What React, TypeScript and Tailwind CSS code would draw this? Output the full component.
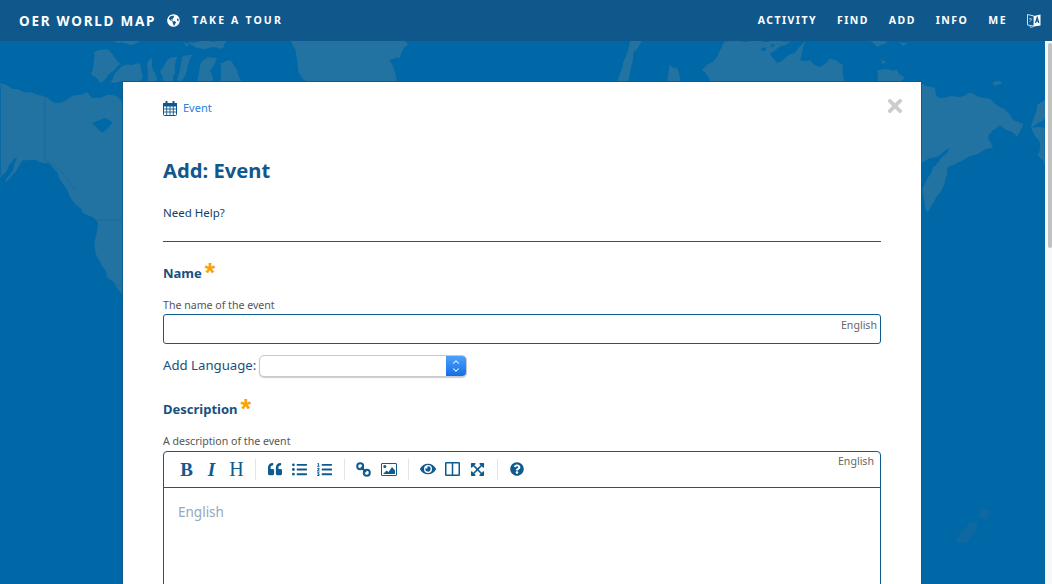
import React from "react";
import { FaGlobeAmericas, FaQuoteLeft, FaListUl, FaListOl, FaEye, FaExpandArrowsAlt, FaQuestionCircle } from "react-icons/fa";
import { ChevronUp, ChevronDown } from "lucide-react";

const land: string[] = [
  "0,83 13,89 33,93 45,97 58,103 77,95 87,92 92,98 113,95 124,103 124,300 115,285 107,277 97,257 95,240 98,222 83,213 72,200 65,187 58,173 47,163 30,160 23,160 17,169 8,180 5,183 13,170 17,157 12,162 6,172 0,178",
  "91,75 94,52 107,49 121,64 110,73 100,83",
  "110,82 115,73 125,65 140,63 143,77 140,82",
  "147,65 152,58 153,70 157,82 147,82",
  "160,72 170,58 177,57 175,73 173,82 163,80",
  "182,57 193,55 187,70 180,82 177,80",
  "197,82 200,65 208,57 217,58 210,70 213,82",
  "220,63 230,60 237,70 242,82 220,82",
  "115,42 130,45 143,40 115,40",
  "180,40 187,47 190,42 227,40 223,48 197,48",
  "290,40 405,40 408,45 402,52 400,58 389,60 395,73 397,82 307,82 302,78 298,70 296,53",
  "630,40 643,40 633,53 627,82 616,82 623,63",
  "667,82 670,65 677,68 680,82",
  "710,82 702,70 717,57 720,50 725,41 790,41 770,53 777,63 797,50 805,41 800,60 810,60 820,67 830,58 843,65 845,82",
  "877,70 897,70 905,78 900,82 877,82",
  "870,41 888,41 877,47",
  "898,41 908,43 903,46",
  "880,58 887,62 882,64",
  "921,83 935,88 937,97 960,97 968,93 987,98 1007,112 1013,120 1023,123 1017,137 1000,125 988,137 993,148 973,155 957,163 947,168 943,187 933,203 927,212 923,187 933,167 947,153 950,148 937,157 921,163",
  "992,83 1000,81 1002,84 995,86",
  "1037,105 1045,100 1045,118 1032,128 1045,128 1045,165 1038,155 1040,143 1032,130 1033,120",
];
const dark: string[] = [
  "92,123 105,118 113,122 108,128 102,133 97,128",
  "760,49 767,47 764,52",
  "772,43 775,46 771,47",
];
const nz: string[] = [
  "956,542 960,533 973,522 978,523 975,533 965,543",
  "977,500 980,507 990,510 987,520 978,517 982,508",
];

// Breaks the long straight edges of a coast into short, slightly uneven steps.
function rough(points: string): string {
  const pts = points.split(" ").map((p) => p.split(",").map(Number));
  const out: string[] = [];
  pts.forEach((a, i) => {
    const b = pts[(i + 1) % pts.length];
    const len = Math.hypot(b[0] - a[0], b[1] - a[1]);
    const n = Math.max(1, Math.round(len / 4));
    for (let k = 0; k < n; k++) {
      const t = k / n;
      const seed = a[0] * 12.9 + a[1] * 78.2 + k * 37.7;
      const j = k === 0 ? 0 : Math.sin(seed) * 1.1;
      const x = a[0] + (b[0] - a[0]) * t + j;
      const y = a[1] + (b[1] - a[1]) * t + Math.cos(seed * 1.7) * (k === 0 ? 0 : 1.1);
      out.push(`${x.toFixed(1)},${y.toFixed(1)}`);
    }
  });
  return out.join(" ");
}

function MapBackground() {
  return (
    <svg className="absolute left-0 top-0" width="1052" height="584" viewBox="0 0 1052 584">
      <g transform="translate(0,-41)">
        {land.map((p, i) => <polygon key={i} points={rough(p)} fill="#2273a2" />)}
        {dark.map((p, i) => <polygon key={i} points={p} fill="#0068a6" />)}
        {nz.map((p, i) => <polygon key={i} points={rough(p)} fill="#0f68a1" />)}
        <polyline points="45,97 45,161 50,163 60,170 75,190" fill="none" stroke="#1b6c9e" strokeWidth="1" />
        <line x1="97" y1="220" x2="124" y2="220" stroke="#1b6c9e" />
        <line x1="115" y1="285" x2="124" y2="285" stroke="#1b6c9e" />
      </g>
    </svg>
  );
}

function Star() {
  return (
    <span className="ml-[3px] h-[20px] -translate-y-[3px] text-[27px] font-bold leading-none text-[#f9a30a]" style={{ fontFamily: '"Liberation Sans", sans-serif' }}>*</span>
  );
}

function Tb({ children }: { children: React.ReactNode }) {
  return <span className="flex h-[25px] w-[25px] items-center justify-center text-[#0f5a8e]">{children}</span>;
}
function Sep({ wide }: { wide?: boolean }) {
  return <span className={wide ? "ml-[7px] mr-[6px] h-[21px] w-px bg-[#e0e4e8]" : "mx-[6px] h-[21px] w-px bg-[#e0e4e8]"} />;
}
const serif = { fontFamily: '"Liberation Serif", serif' };

function TranslateIcon() {
  return (
    <svg width="14" height="15" viewBox="0 0 14 15" fill="none">
      <path d="M0.5 1.5 L7 3 V13 L0.5 12 Z" stroke="#cfe0ec" strokeWidth="1" />
      <path d="M7 3 L13.5 1.5 V12.5 L7 13.5 Z" fill="#fff" />
      <path d="M3 13 L3.5 14.5 L7 13.5" stroke="#cfe0ec" strokeWidth="0.8" />
      <path d="M8.5 10 L10.2 4.5 L11.9 10 M9.2 8.2 H11.2" stroke="#10588c" strokeWidth="1.2" />
      <path d="M2 6 H5 M3.5 5 V6 M2.5 9 L4.8 6.5" stroke="#cfe0ec" strokeWidth="0.7" />
    </svg>
  );
}

function CalendarIcon() {
  return (
    <svg width="14" height="15" viewBox="0 0 14 15" fill="none">
      <rect x="0.5" y="2.5" width="13" height="12" rx="1" stroke="#10588c" />
      <rect x="0" y="2" width="14" height="3.5" fill="#10588c" />
      <path d="M3.5 0.5 V3.5 M10.5 0.5 V3.5" stroke="#10588c" strokeWidth="2" strokeLinecap="round" />
      <path d="M0.5 8 H13.5 M0.5 11 H13.5 M3.7 5 V14 M7 5 V14 M10.3 5 V14" stroke="#10588c" strokeWidth="0.9" />
    </svg>
  );
}

function CloseIcon() {
  return (
    <svg width="14" height="14" viewBox="0 0 14 14" className="absolute right-[19px] top-[17px]">
      <path d="M2 2 L12 12 M12 2 L2 12" stroke="#cccccc" strokeWidth="3.8" strokeLinecap="square" />
    </svg>
  );
}

function LinkIcon() {
  return (
    <svg width="15" height="15" viewBox="0 0 15 15" fill="none" stroke="#0f5a8e" strokeWidth="2">
      <circle cx="4.2" cy="4.2" r="3" />
      <circle cx="10.8" cy="10.8" r="3" />
      <path d="M5 5 L10 10" />
    </svg>
  );
}

function ImageIcon() {
  return (
    <svg width="16" height="13" viewBox="0 0 16 13" fill="none">
      <rect x="0.5" y="0.5" width="15" height="12" rx="0.5" stroke="#0f5a8e" />
      <circle cx="3.8" cy="3.6" r="1.5" fill="#0f5a8e" />
      <path d="M2 11 L5.5 7.5 L7.5 9 L11 4 L14 7.5 V11 Z" fill="#0f5a8e" />
    </svg>
  );
}

function ColumnsIcon() {
  return (
    <svg width="15" height="14" viewBox="0 0 15 14" fill="none" stroke="#0f5a8e">
      <rect x="0.75" y="0.75" width="13.5" height="12.5" rx="0.5" strokeWidth="1.5" />
      <path d="M7.5 1 V13" strokeWidth="1.5" />
    </svg>
  );
}

export default function App() {
  const bold = "font-bold text-white";
  const nav = `text-[10.5px] tracking-[1.45px] ${bold}`;
  return (
    <div className="flex h-[584px] w-[1052px] flex-col overflow-hidden bg-[#0068a6]" style={{ fontFamily: '"Noto Sans", sans-serif' }}>
      <header className="relative z-10 flex h-[41px] shrink-0 items-center bg-[#10588c] pl-[19px] pr-[11px] pt-[1px]">
        <span className={`text-[13.5px] tracking-[1.75px] ${bold}`}>OER WORLD MAP</span>
        <FaGlobeAmericas className="ml-[11px] -translate-y-[1px] text-white" size={13} />
        <span className={`ml-[12px] text-[10.5px] tracking-[2.15px] ${bold}`}>TAKE A TOUR</span>
        <nav className="ml-auto flex items-center gap-[20px]">
          <span className={nav}>ACTIVITY</span>
          <span className={nav}>FIND</span>
          <span className={nav}>ADD</span>
          <span className={nav}>INFO</span>
          <span className={nav}>ME</span>
          <span className="-translate-y-[1px]"><TranslateIcon /></span>
        </nav>
      </header>
      <div className="flex min-h-0 flex-1">
        <main className="relative min-w-0 flex-1 overflow-hidden">
          <MapBackground />
          <section className="relative ml-[122px] mt-[40px] w-[800px] border border-[#0f5a8e] bg-white px-[40px] pb-[60px] pt-[18px]">
            <CloseIcon />
            <div className="flex h-[16px] items-center">
              <CalendarIcon />
              <span className="ml-[6px] text-[11px] text-[#2b7de0]">Event</span>
            </div>
            <h1 className="mt-[39px] text-[20.2px] font-bold leading-[30px] text-[#10588c]">Add: Event</h1>
            <p className="mt-[20px] text-[11.5px] leading-[16px] text-[#123f6b]">Need Help?</p>
            <hr className="mt-[20px] border-0 border-t border-[#0f5a8e]" />
            <div className="mt-[21px] flex h-[20px] items-center">
              <span className="text-[13px] font-bold leading-[20px] text-[#18507e]">Name</span>
              <Star />
            </div>
            <p className="mt-[15px] text-[10.6px] leading-[14px] text-[#555]">The name of the event</p>
            <div className="relative mt-[2px] h-[30px] rounded-[3px] border border-[#0f5a8e] bg-white">
              <span className="absolute right-[3px] top-[3px] text-[10.6px] leading-[14px] text-[#666]">English</span>
            </div>
            <div className="mt-[11px] flex h-[22px] items-center">
              <span className="w-[93px] whitespace-nowrap text-[13.2px] text-[#18507e]">Add Language:</span>
              <div className="ml-[3px] flex h-[22px] w-[208px] overflow-hidden rounded-[5px] border border-[#c8c8c8] bg-white shadow-[0_1px_1px_rgba(0,0,0,0.2)]">
                <span className="flex-1" />
                <span className="flex w-[20px] flex-col items-center justify-center bg-gradient-to-b from-[#4ba0fb] to-[#0f6fe6] text-white">
                  <ChevronUp size={10} strokeWidth={2.5} className="-mb-[1px]" />
                  <ChevronDown size={10} strokeWidth={2.5} className="-mt-[1px]" />
                </span>
              </div>
            </div>
            <div className="mt-[22px] flex h-[20px] items-center">
              <span className="text-[13px] font-bold leading-[20px] text-[#18507e]">Description</span>
              <Star />
            </div>
            <p className="mt-[15px] text-[10.6px] leading-[14px] text-[#555]">A description of the event</p>
            <div className="mt-[3px] rounded-t-[4px] border border-[#0f5a8e]">
              <div className="relative flex h-[36px] items-center border-b border-[#0f5a8e] pb-[1px] pl-[10px]">
                <Tb><b className="text-[19px] leading-none" style={serif}>B</b></Tb>
                <Tb><i className="text-[19px] font-bold leading-none" style={serif}>I</i></Tb>
                <Tb><b className="text-[20px] font-normal leading-none" style={serif}>H</b></Tb>
                <Sep />
                <Tb><FaQuoteLeft size={14} /></Tb>
                <Tb><FaListUl size={15} /></Tb>
                <Tb><FaListOl size={15} /></Tb>
                <Sep wide />
                <Tb><LinkIcon /></Tb>
                <Tb><ImageIcon /></Tb>
                <Sep wide />
                <Tb><FaEye size={16} /></Tb>
                <Tb><ColumnsIcon /></Tb>
                <Tb><FaExpandArrowsAlt size={15} /></Tb>
                <Sep wide />
                <Tb><FaQuestionCircle size={14} /></Tb>
                <span className="absolute right-[6px] top-[2px] text-[10.6px] leading-[14px] text-[#666]">English</span>
              </div>
              <div className="h-[200px] px-[14px] pt-[14px] text-[13.5px] leading-[20px] text-[#93a9bf]">English</div>
            </div>
          </section>
        </main>
        <aside className="relative z-10 h-full w-[7px] shrink-0 bg-[#f8f8f8] pl-[3px] pt-[2px]">
          <div className="h-[205px] w-[4px] rounded-[2px] bg-[#c2c2c2]" />
        </aside>
      </div>
    </div>
  );
}
